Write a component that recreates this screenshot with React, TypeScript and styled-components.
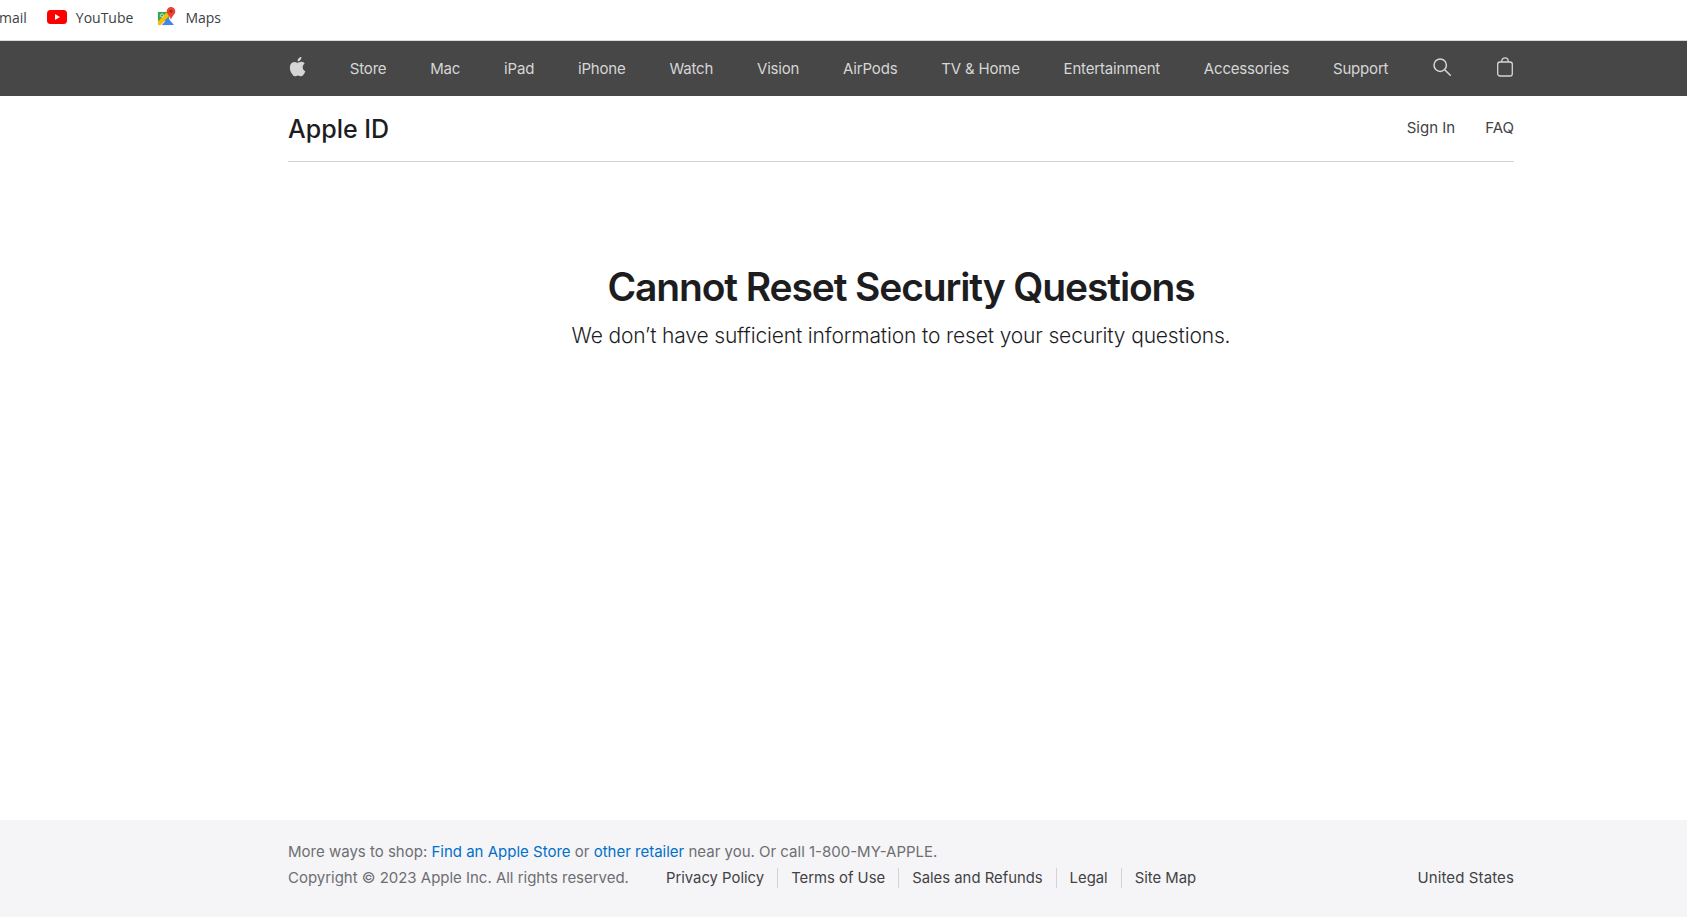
import React, { ReactElement } from 'react';
import styled, { createGlobalStyle } from 'styled-components';

const navItems = [
  'Store',
  'Mac',
  'iPad',
  'iPhone',
  'Watch',
  'Vision',
  'AirPods',
  'TV & Home',
  'Entertainment',
  'Accessories',
  'Support',
];
const legalLinks = ['Privacy Policy', 'Terms of Use', 'Sales and Refunds', 'Legal', 'Site Map'];

const App = (): ReactElement => {
  return (
    <Page>
      <GlobalStyle />
      <BookmarkBar>
        <Bookmark $clipped>mail</Bookmark>
        <Bookmark>
          <svg width="20" height="14" viewBox="0 0 20 14">
            <rect width="20" height="14" rx="3.5" fill="#f00" />
            <path d="M8 4l5 3-5 3z" fill="#fff" />
          </svg>
          YouTube
        </Bookmark>
        <Bookmark>
          <MapsIcon width="19" height="19" viewBox="0 0 19 19">
            <path d="M.5 4.500h12.500v14H.5z" fill="#e8eaed" />
            <path d="M1 5h11v9L1 14z" fill="#34a853" />
            <path d="M5 18L11 11l6 7z" fill="#4285f4" />
            <path d="M1 14.500L10 5h2.500v3.500L3.500 18H1z" fill="#fbbc04" />
            <circle cx="5" cy="8.500" r="1.600" fill="none" stroke="#d2e8d8" strokeWidth="1" />
            <path d="M14 0a4.300 4.300 0 0 1 4.300 4.300C18.300 7.500 15 9 14 13 13 9 9.700 7.500 9.700 4.300A4.300 4.300 0 0 1 14 0z" fill="#ea4335" />
            <circle cx="14" cy="4.300" r="1.500" fill="#a52714" />
          </MapsIcon>
          Maps
        </Bookmark>
      </BookmarkBar>
      <GlobalNav>
        <NavInner>
          <NavIcon>
            <svg width="18" height="21" viewBox="0 0 18 21" fill="#d6d6d6">
              <path d="M14.700 11.100c0-2.300 1.900-3.400 2-3.500-1.100-1.600-2.800-1.800-3.400-1.800-1.400-.1-2.800.9-3.500.9-.7 0-1.900-.8-3.100-.8C5 5.900 3.500 6.800 2.700 8.200 1 11.100 2.300 15.400 3.900 17.800c.8 1.200 1.800 2.500 3 2.400 1.200 0 1.700-.8 3.100-.8 1.500 0 1.900.8 3.100.8 1.300 0 2.100-1.200 2.900-2.300.9-1.300 1.300-2.600 1.300-2.700-.1 0-2.600-1-2.600-3.900z" />
              <path d="M12.400 4c.6-.8 1.100-1.900 1-3-1 0-2.100.6-2.800 1.400-.6.700-1.100 1.800-1 2.900 1.100.1 2.200-.5 2.800-1.300z" />
            </svg>
          </NavIcon>
          {navItems.map((item) => (
            <NavLink key={item}>{item}</NavLink>
          ))}
          <NavIcon>
            <svg width="20" height="20" viewBox="0 0 20 20" fill="none" stroke="#d6d6d6" strokeWidth="1.500" strokeLinecap="round">
              <circle cx="8.200" cy="8.200" r="6.200" />
              <path d="M12.700 12.700l5.600 5.600" />
            </svg>
          </NavIcon>
          <NavIcon>
            <svg width="18" height="20" viewBox="0 0 18 20" fill="none" stroke="#d6d6d6" strokeWidth="1.300">
              <rect x="1.700" y="5" width="14.600" height="14" rx="2.200" />
              <path d="M5.800 5V4a3.200 3.200 0 0 1 6.400 0v1" />
            </svg>
          </NavIcon>
        </NavInner>
      </GlobalNav>
      <Content>
        <LocalNav>
          <Title>Apple ID</Title>
          <LocalLinks>
            <LocalLink>Sign In</LocalLink>
            <LocalLink>FAQ</LocalLink>
          </LocalLinks>
        </LocalNav>
        <Main>
          <Heading>Cannot Reset Security Questions</Heading>
          <Message>We don’t have sufficient information to reset your security questions.</Message>
        </Main>
      </Content>
      <Footer>
        <FooterInner>
          <ShopLine>
            More ways to shop: <FooterAnchor>Find an Apple Store</FooterAnchor> or{' '}
            <FooterAnchor>other retailer</FooterAnchor> near you. Or call 1-800-MY-APPLE.
          </ShopLine>
          <LegalRow>
            <Copyright>Copyright © 2023 Apple Inc. All rights reserved.</Copyright>
            <LegalLinks>
              {legalLinks.map((link) => (
                <LegalLink key={link}>{link}</LegalLink>
              ))}
            </LegalLinks>
            <Country>United States</Country>
          </LegalRow>
        </FooterInner>
      </Footer>
    </Page>
  );
};

const GlobalStyle = createGlobalStyle`
  html, body {
    margin: 0;
    padding: 0;
    background: #fff;
  }
  body {
    font-family: Inter, "Liberation Sans", sans-serif;
    color: #1d1d1f;
  }
`;

const Page = styled.div`
  height: 917px;
  display: flex;
  flex-direction: column;
  overflow: hidden;
`;

const BookmarkBar = styled.div`
  height: 40px;
  flex: none;
  display: flex;
  align-items: flex-start;
  gap: 22px;
  background: #fff;
  border-bottom: 1px solid #d9d9d9;
  overflow: hidden;
`;

const Bookmark = styled.div<{ $clipped?: boolean }>`
  display: flex;
  align-items: center;
  gap: 9px;
  height: 34px;
  font-family: "Open Sans", "Noto Sans", sans-serif;
  font-size: 14px;
  color: #3c4043;
  margin-left: ${(p) => (p.$clipped ? '-1px' : '0')};
  margin-right: ${(p) => (p.$clipped ? '-2px' : '0')};
`;

const MapsIcon = styled.svg`
  margin-left: 2px;
  margin-right: 0;
  margin-top: -2px;
`;

const GlobalNav = styled.nav`
  height: 55px;
  flex: none;
  background: #474747;
`;

const NavInner = styled.div`
  width: 1226px;
  height: 100%;
  margin-left: 288px;
  display: flex;
  align-items: center;
  justify-content: space-between;
`;

const NavLink = styled.a`
  font-size: 15px;
  letter-spacing: -0.18px;
  color: #d6d6d6;
  margin-top: -1px;
`;

const NavIcon = styled.span`
  display: flex;
  align-items: center;
  margin-top: -4px;
`;

const Content = styled.div`
  flex: 1;
  width: 1226px;
  margin-left: 288px;
  display: flex;
  flex-direction: column;
`;

const LocalNav = styled.div`
  height: 65px;
  flex: none;
  display: flex;
  align-items: center;
  justify-content: space-between;
  border-bottom: 1px solid #d2d2d7;
`;

const Title = styled.div`
  font-size: 25px;
  font-weight: 500;
  color: #1d1d1f;
`;

const LocalLinks = styled.div`
  display: flex;
  gap: 30px;
  margin-top: -3px;
`;

const LocalLink = styled.a`
  font-size: 15px;
  color: #424245;
`;

const Main = styled.main`
  padding-top: 101px;
  text-align: center;
`;

const Heading = styled.h1`
  margin: 0;
  font-size: 39px;
  line-height: 48px;
  font-weight: 600;
  color: #1d1d1f;
  letter-spacing: -1.13px;
`;

const Message = styled.p`
  margin: 11px 0 0;
  font-size: 21px;
  line-height: 28px;
  font-weight: 300;
  letter-spacing: -0.15px;
  color: #1d1d1f;
`;

const Footer = styled.footer`
  height: 97px;
  flex: none;
  background: #f5f5f7;
`;

const FooterInner = styled.div`
  width: 1226px;
  margin-left: 288px;
  padding-top: 22px;
  font-size: 15px;
  line-height: 20px;
  color: #6e6e73;
`;

const ShopLine = styled.div`
  height: 26px;
`;

const FooterAnchor = styled.a`
  color: #0070c9;
`;

const LegalRow = styled.div`
  display: flex;
  align-items: center;
`;

const Copyright = styled.div`
  margin-right: 24px;
  letter-spacing: -0.02px;
`;

const LegalLinks = styled.div`
  display: flex;
  flex: 1;
`;

const LegalLink = styled.a`
  font-size: 14.85px;
  color: #424245;
  padding: 0 13px;
  border-right: 1px solid #d2d2d7;
  &:last-child {
    border-right: none;
  }
`;

const Country = styled.div`
  color: #424245;
  letter-spacing: 0.12px;
`;

export default App;
